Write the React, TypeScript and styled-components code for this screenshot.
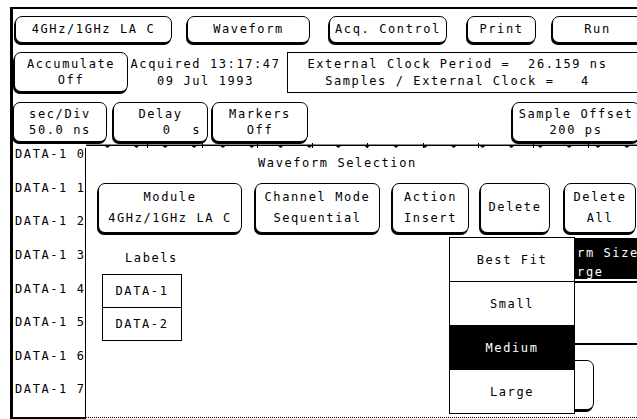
import React from "react";
import styled, { createGlobalStyle } from "styled-components";

const GlobalStyle = createGlobalStyle`
  html, body { margin: 0; padding: 0; background: #fff; }
  body { font-family: "DejaVu Sans Mono", "Liberation Mono", monospace; }
`;

const Screen = styled.div`
  position: relative;
  width: 637px;
  height: 419px;
  overflow: hidden;
  background: #fff;
  color: #000;
  font-family: "DejaVu Sans Mono", "Liberation Mono", monospace;
  font-size: 12px;
  letter-spacing: 1.6px;
`;

const Frame = styled.div`
  margin: 7px 0 0 10px;
  border-top: 2px solid #000;
  border-left: 3px solid #000;
  height: 410px;
  display: flex;
  flex-direction: column;
`;

const Row = styled.div<{ $mt: number; $h: number }>`
  display: flex;
  align-items: flex-start;
  flex-shrink: 0;
  margin-top: ${(p) => p.$mt}px;
  height: ${(p) => p.$h}px;
`;

const Softkey = styled.div<{ $w: number; $h: number; $ml?: number; $lh?: number }>`
  box-sizing: border-box;
  flex: 0 0 auto;
  width: ${(p) => p.$w}px;
  height: ${(p) => p.$h}px;
  margin-left: ${(p) => p.$ml ?? 0}px;
  border: 1px solid #000;
  border-radius: 7px;
  box-shadow: -1px 2px 0 0 #000;
  background: #fff;
  display: flex;
  flex-direction: column;
  align-items: center;
  justify-content: center;
  line-height: ${(p) => p.$lh ?? 16.5}px;
  white-space: pre;
`;

const InvertedKey = styled(Softkey)`
  background: #000;
  color: #fff;
  justify-content: flex-start;
  padding-top: 5px;
  box-shadow: 0 2px 0 0 #fff, -1px 4px 0 0 #000;
`;

const KeyLine = styled.span<{ $right?: number }>`
  display: block;
  ${(p) =>
    p.$right !== undefined
      ? `align-self: flex-end; padding-right: ${p.$right}px; word-spacing: 1.5px;`
      : ""}
`;

const AcqText = styled.div`
  width: 160px;
  height: 41px;
  display: flex;
  flex-direction: column;
  justify-content: center;
  align-items: center;
  line-height: 16.5px;
  white-space: pre;
`;

const InfoBox = styled.div`
  box-sizing: border-box;
  flex: 0 0 auto;
  width: 350px;
  height: 41px;
  margin-left: 4px;
  border: 1px solid #000;
  border-right: none;
  padding-right: 10px;
  display: flex;
  flex-direction: column;
  justify-content: center;
  align-items: center;
  line-height: 16.5px;
  white-space: pre;
`;

const RulerSvg = styled.svg`
  display: block;
  flex-shrink: 0;
  margin: 1px 0 0 73px;
  width: 551px;
  height: 5px;
`;

const DataArea = styled.div`
  display: flex;
  height: 271px;
  flex-shrink: 0;
`;

const LabelCol = styled.div`
  box-sizing: border-box;
  width: 73px;
  height: 271px;
  border-right: 1px solid #000;
  border-bottom: 2px solid #000;
  display: grid;
  grid-template-rows: repeat(8, 1fr);
`;

const ChannelLabel = styled.div`
  padding-left: 2px;
  line-height: 12px;
  white-space: pre;
`;

const Dialog = styled.div`
  position: relative;
  box-sizing: border-box;
  width: 551px;
  height: 270px;
  border-bottom: 1px dotted #000;
  display: flex;
  flex-direction: column;
`;

const DialogTitle = styled.div`
  margin-top: 8px;
  padding-left: 172px;
  line-height: 14px;
`;

const KeyRow = styled.div`
  display: flex;
  margin-top: 13px;
  height: 50px;
  flex-shrink: 0;
`;

const Lower = styled.div`
  display: grid;
  grid-template-columns: 414px 143px;
  height: 184px;
`;

const LeftCol = styled.div`
  display: flex;
  flex-direction: column;
  align-items: flex-start;
`;

const SectionLabel = styled.div`
  margin: 18px 0 0 39px;
  line-height: 14px;
`;

const ListBox = styled.div`
  margin: 9px 0 0 16px;
  width: 80px;
  box-sizing: border-box;
  border: 1px solid #000;
  display: flex;
  flex-direction: column;
`;

const ListCell = styled.div`
  height: 32px;
  display: flex;
  align-items: center;
  justify-content: center;
  & + & {
    border-top: 1px solid #000;
  }
`;

const RightCol = styled.div`
  display: flex;
  flex-direction: column;
  align-items: flex-start;
`;

const Rule = styled.div<{ $mt: number }>`
  margin-top: ${(p) => p.$mt}px;
  width: 143px;
  height: 2px;
  background: #000;
`;

const Menu = styled.div`
  position: absolute;
  left: 363px;
  top: 89px;
  width: 126px;
  box-sizing: border-box;
  border: 1px solid #000;
  background: #fff;
  display: flex;
  flex-direction: column;
`;

const MenuItem = styled.div<{ $active?: boolean }>`
  height: 43px;
  display: flex;
  align-items: center;
  justify-content: center;
  background: ${(p) => (p.$active ? "#000" : "#fff")};
  color: ${(p) => (p.$active ? "#fff" : "#000")};
  & + & {
    border-top: 1px solid #000;
  }
`;

const triangles = Array.from({ length: 19 }, (_, k) => 21.5 + 28.85 * k);
const vticks = Array.from({ length: 9 }, (_, k) => 61 + 55.1 * k);

function Ruler() {
  return (
    <RulerSvg viewBox="0 0 551 5">
      <rect x="0" y="1" width="551" height="1" fill="#888" />
      <rect x="0" y="2" width="551" height="1" fill="#000" />
      {vticks.map((x) => (
        <rect key={"v" + x} x={Math.round(x)} y="0" width="1" height="5" fill="#000" />
      ))}
      {triangles.map((x) => (
        <polygon key={"t" + x} points={`${x - 2.5},3 ${x + 2.5},3 ${x},5`} fill="#000" />
      ))}
    </RulerSvg>
  );
}

const channels = [0, 1, 2, 3, 4, 5, 6, 7];

export default function App() {
  return (
    <>
      <GlobalStyle />
      <Screen>
        <Frame>
          <Row $mt={7} $h={27}>
            <Softkey $w={157} $h={27} $ml={2}>4GHz/1GHz LA C</Softkey>
            <Softkey $w={123} $h={27} $ml={15}>Waveform</Softkey>
            <Softkey $w={118} $h={27} $ml={19}>Acq. Control</Softkey>
            <Softkey $w={69} $h={27} $ml={20}>Print</Softkey>
            <Softkey $w={91} $h={27} $ml={16}>Run</Softkey>
          </Row>
          <Row $mt={9} $h={41}>
            <Softkey $w={114} $h={40} $ml={1}>
              <KeyLine>Accumulate</KeyLine>
              <KeyLine>Off</KeyLine>
            </Softkey>
            <AcqText>
              <span>Acquired 13:17:47</span>
              <span>09 Jul 1993</span>
            </AcqText>
            <InfoBox>
              <span>External Clock Period =  26.159 ns</span>
              <span>Samples / External Clock =   4</span>
            </InfoBox>
          </Row>
          <Row $mt={9} $h={40}>
            <Softkey $w={94} $h={40}>
              <KeyLine>sec/Div</KeyLine>
              <KeyLine>50.0 ns</KeyLine>
            </Softkey>
            <Softkey $w={95} $h={40} $ml={6}>
              <KeyLine>Delay</KeyLine>
              <KeyLine $right={6}>0  s</KeyLine>
            </Softkey>
            <Softkey $w={96} $h={40} $ml={4}>
              <KeyLine>Markers</KeyLine>
              <KeyLine>Off</KeyLine>
            </Softkey>
            <Softkey $w={128} $h={40} $ml={204}>
              <KeyLine>Sample Offset</KeyLine>
              <KeyLine>200 ps</KeyLine>
            </Softkey>
          </Row>
          <Ruler />
          <DataArea>
            <LabelCol>
              {channels.map((c) => (
                <ChannelLabel key={c}>{`DATA-1 ${c}`}</ChannelLabel>
              ))}
            </LabelCol>
            <Dialog>
              <DialogTitle>Waveform Selection</DialogTitle>
              <KeyRow>
                <Softkey $w={144} $h={50} $ml={12} $lh={21.5}>
                  <KeyLine>Module</KeyLine>
                  <KeyLine>4GHz/1GHz LA C</KeyLine>
                </Softkey>
                <Softkey $w={125} $h={50} $ml={13} $lh={21.5}>
                  <KeyLine>Channel Mode</KeyLine>
                  <KeyLine>Sequential</KeyLine>
                </Softkey>
                <Softkey $w={77} $h={50} $ml={12} $lh={21.5}>
                  <KeyLine>Action</KeyLine>
                  <KeyLine>Insert</KeyLine>
                </Softkey>
                <Softkey $w={70} $h={50} $ml={11} $lh={21.5}>
                  <KeyLine>Delete</KeyLine>
                </Softkey>
                <Softkey $w={72} $h={50} $ml={14} $lh={21.5}>
                  <KeyLine>Delete</KeyLine>
                  <KeyLine>All</KeyLine>
                </Softkey>
              </KeyRow>
              <Lower>
                <LeftCol>
                  <SectionLabel>Labels</SectionLabel>
                  <ListBox>
                    <ListCell>DATA-1</ListCell>
                    <ListCell>DATA-2</ListCell>
                  </ListBox>
                </LeftCol>
                <RightCol>
                  <InvertedKey $w={123} $h={41} $ml={20} $lh={18.5} style={{ marginTop: 5 }}>
                    <KeyLine>Waveform Size</KeyLine>
                    <KeyLine>Large</KeyLine>
                  </InvertedKey>
                  <Rule $mt={64} />
                  <Softkey $w={94} $h={50} style={{ marginTop: 15 }} />
                </RightCol>
              </Lower>
              <Menu>
                <MenuItem>Best Fit</MenuItem>
                <MenuItem>Small</MenuItem>
                <MenuItem $active>Medium</MenuItem>
                <MenuItem>Large</MenuItem>
              </Menu>
            </Dialog>
          </DataArea>
        </Frame>
      </Screen>
    </>
  );
}
